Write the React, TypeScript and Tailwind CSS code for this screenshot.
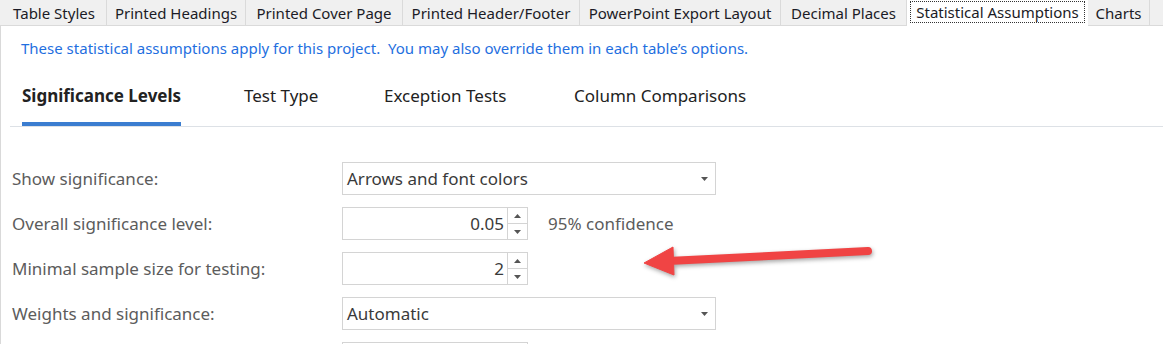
const tabs = [
  { label: 'Table Styles', w: 'w-[105px]' },
  { label: 'Printed Headings', w: 'w-[139px]' },
  { label: 'Printed Cover Page', w: 'w-[157px]' },
  { label: 'Printed Header/Footer', w: 'w-[177px]' },
  { label: 'PowerPoint Export Layout', w: 'w-[201px]' },
  { label: 'Decimal Places', w: 'w-[126px]' },
  { label: 'Statistical Assumptions', w: 'w-[181px]', active: true },
  { label: 'Charts', w: 'w-[62px]' },
];

const subTabs = [
  { label: 'Significance Levels', w: 'w-[222px]', active: true },
  { label: 'Test Type', w: 'w-[140px]' },
  { label: 'Exception Tests', w: 'w-[190px]' },
  { label: 'Column Comparisons', w: 'w-auto' },
];

function Caret() {
  return (
    <svg width="7" height="4" viewBox="0 0 7 4" className="shrink-0">
      <path d="M0 0 H7 L3.5 4 Z" fill="#555" />
    </svg>
  );
}

function Dropdown({ value }: { value: string }) {
  return (
    <div className="flex h-[33px] w-[374px] items-center justify-between border border-[#d4d4d4] bg-white pl-[4px] pr-[7px] text-[#3a3a3a]">
      <span>{value}</span>
      <Caret />
    </div>
  );
}

function Spinner({ value }: { value: string }) {
  return (
    <div className="flex h-[33px] w-[186px] border border-[#d4d4d4] bg-white text-[#3a3a3a]">
      <div className="flex flex-1 items-center justify-end pr-[3px]">{value}</div>
      <div className="flex w-[20px] flex-col border-l border-[#d4d4d4]">
        <div className="flex flex-1 items-center justify-center border-b border-[#d4d4d4]">
          <svg width="7" height="4" viewBox="0 0 7 4">
            <path d="M0 4 H7 L3.5 0 Z" fill="#555" />
          </svg>
        </div>
        <div className="flex flex-1 items-center justify-center">
          <Caret />
        </div>
      </div>
    </div>
  );
}

function Row({ label, children }: { label: string; children: React.ReactNode }) {
  return (
    <div className="flex h-[33px] items-center">
      <div className="w-[341px] pl-[11px] text-[#5c5c5c]">{label}</div>
      {children}
    </div>
  );
}

export default function App() {
  return (
    <div className="relative h-[344px] w-[1163px] overflow-hidden bg-white font-['Noto_Sans',sans-serif]">
      {/* window tabs */}
      <div className="flex h-[26px] border-b border-[#dadada] bg-[#f0f0f0] pl-[2px] text-[15px] text-[#1b1b26]">
        {tabs.map((t) =>
          t.active ? (
            <div key={t.label} className={`${t.w} -mb-px flex h-[26px] items-start bg-white px-[3px] pt-[1px]`}>
              <span className="flex h-[22px] w-full items-center justify-center border border-dotted border-[#333]">
                {t.label}
              </span>
            </div>
          ) : (
            <div key={t.label} className={`${t.w} flex items-center justify-center border-r border-[#dadada] pt-[1px]`}>
              {t.label}
            </div>
          )
        )}
      </div>

      <div className="h-[318px] border-l border-[#d9d9d9]">
        <p className="h-[54px] pl-[20px] pt-[11px] text-[15px] text-[#1f6fe0]">
          These statistical assumptions apply for this project.&nbsp; You may also override them in each table’s options.
        </p>

        {/* sub tabs */}
        <div className="ml-[9px] flex h-[47px] border-b border-[#dde1e6] pl-[12px] text-[17px] text-[#222]">
          {subTabs.map((s) => (
            <div key={s.label} className={`${s.w} flex`}>
              <div className={`flex flex-col ${s.active ? 'font-bold' : ''}`}>
                <span className="mt-[4px] h-[23px] leading-[23px]">{s.label}</span>
                {s.active && <span className="mt-[15px] h-[4px] bg-[#3b7dd0]" />}
              </div>
            </div>
          ))}
        </div>

        {/* form */}
        <div className="mt-[35px] flex flex-col gap-[12px] text-[17px]">
          <Row label="Show significance:">
            <Dropdown value="Arrows and font colors" />
          </Row>
          <Row label="Overall significance level:">
            <Spinner value="0.05" />
            <span className="ml-[20px] text-[#5c5c5c]">95% confidence</span>
          </Row>
          <Row label="Minimal sample size for testing:">
            <Spinner value="2" />
          </Row>
          <Row label="Weights and significance:">
            <Dropdown value="Automatic" />
          </Row>
          <Row label="">
            <div className="h-[33px] w-[186px] border border-[#d4d4d4]" />
          </Row>
        </div>
      </div>

      {/* callout arrow */}
      <svg
        className="absolute left-[640px] top-[240px] drop-shadow-[1px_2px_2px_rgba(0,0,0,0.35)]"
        width="235"
        height="45"
        viewBox="0 0 235 45"
      >
        <line x1="28" y1="21" x2="228" y2="11" stroke="#f04444" strokeWidth="8" strokeLinecap="round" />
        <path d="M4 23 L33 7 L34 35 Z" fill="#f04444" strokeLinejoin="round" stroke="#f04444" strokeWidth="1" />
      </svg>
    </div>
  );
}
